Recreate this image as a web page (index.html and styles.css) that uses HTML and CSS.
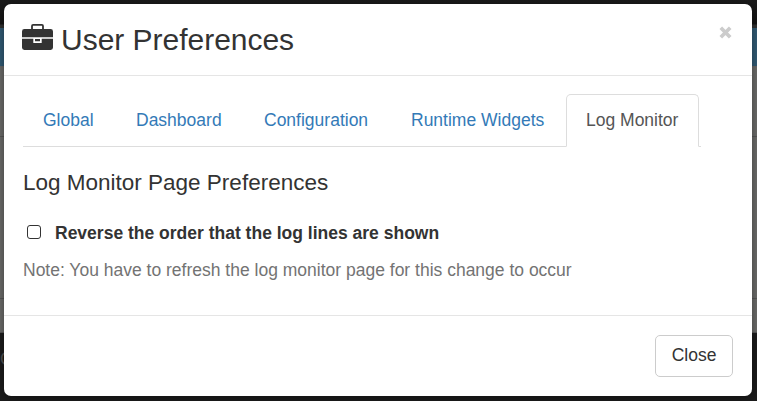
FILE: index.html
```
<!DOCTYPE html>
<html lang="en">
<head>
<meta charset="utf-8">
<title>User Preferences</title>
<link rel="stylesheet" href="styles.css">
</head>
<body>
<div class="page" aria-hidden="true">
  <div class="page-nav"></div>
  <div class="page-banner"></div>
  <div class="page-row row-first"></div>
  <div class="page-row row-middle"></div>
  <div class="page-row row-last"></div>
  <div class="page-footer">C</div>
</div>
<div class="modal" role="dialog" aria-labelledby="title">
  <header class="modal-header">
    <svg class="briefcase" viewBox="0 0 31 26" aria-hidden="true">
      <path d="M10 5V2Q10 .9 11.1 .9H19.9Q21 .9 21 2V5" fill="none" stroke="#333" stroke-width="1.8"/>
      <path d="M2.4 5H28.6Q31 5 31 7.4V13.3H0V7.4Q0 5 2.4 5ZM0 14.8H11.3V19H19.7V14.8H31V23.6Q31 26 28.6 26H2.4Q0 26 0 23.6ZM13 15H18V17.3H13Z" fill="#333"/>
    </svg>
    <h1 class="title" id="title">User Preferences</h1>
    <button class="dismiss" aria-label="Dismiss">
      <svg viewBox="0 0 13 13"><path d="M1.8 1.8L11.2 11.2M11.2 1.8L1.8 11.2"/></svg>
    </button>
  </header>
  <main class="modal-body">
    <nav class="tabs">
      <a class="tab tab-global">Global</a>
      <a class="tab tab-dashboard">Dashboard</a>
      <a class="tab tab-configuration">Configuration</a>
      <a class="tab tab-widgets">Runtime Widgets</a>
      <a class="tab tab-log active">Log Monitor</a>
    </nav>
    <h2 class="section-title">Log Monitor Page Preferences</h2>
    <label class="option"><input class="checkbox" type="checkbox"><span>Reverse the order that the log lines are shown</span></label>
    <p class="note">Note: You have to refresh the log monitor page for this change to occur</p>
  </main>
  <footer class="modal-footer"><button class="close-button">Close</button></footer>
</div>
</body>
</html>
```
FILE: styles.css
```
* { box-sizing: border-box; }
body {
  margin: 0;
  height: 401px;
  overflow: hidden;
  background: #1a1a1a;
  color: #333;
  font: 17.5px/25px "Liberation Sans", Arial, sans-serif;
}
h1, h2, p { margin: 0; font-weight: 400; }
.page { display: flex; flex-direction: column; height: 401px; }
.page-nav { height: 28px; background: linear-gradient(#1b1b1b, #141414 24px, #303030 25px); }
.page-banner { height: 39px; background: #315a73; border-bottom: 1px solid #666; }
.page-row { background: #6a6a68; border-bottom: 1px solid #555; }
.row-first { height: 70px; }
.row-middle { height: 162px; }
.row-last { height: 34px; }
.page-footer { flex: 1; padding-top: 14px; background: #1c1c1c; color: #505050; }
.modal {
  position: absolute;
  top: 4px;
  left: 4px;
  width: 748px;
  height: 392px;
  display: flex;
  flex-direction: column;
  background: #fff;
  border-radius: 7px;
  box-shadow: 0 2px 8px rgba(0, 0, 0, .4);
}
.modal-header {
  display: flex;
  height: 72px;
  padding: 20px 20px 0 18px;
  border-bottom: 1px solid #e5e5e5;
}
.briefcase { width: 31px; height: 26px; }
.title { margin: -1px 0 0 8px; font-size: 30px; line-height: 33px; letter-spacing: -.02px; }
.dismiss { width: 13px; height: 13px; margin: 2px 0 0 auto; padding: 0; border: 0; background: none; }
.dismiss svg { display: block; width: 13px; height: 13px; stroke: #ccc; stroke-width: 3.7; }
.modal-body { height: 239px; padding: 18px 19px 0; }
.tabs { display: flex; width: 678px; height: 53px; border-bottom: 1px solid #ddd; }
.tab {
  height: 53px;
  padding: 13px 19px 0;
  border: 1px solid transparent;
  border-radius: 5px 5px 0 0;
  color: #337ab7;
  white-space: nowrap;
}
.tab-global { width: 93px; }
.tab-dashboard { width: 128px; }
.tab-configuration { width: 147px; }
.tab-widgets { width: 175px; }
.tab-log { width: 133px; }
.tab.active { color: #555; background: #fff; border-color: #ddd #ddd #fff; }
.section-title { margin-top: 23px; font-size: 22.5px; line-height: 26px; }
.option { display: flex; align-items: center; height: 26px; margin-top: 24px; padding-left: 4px; font-weight: 700; }
.checkbox { appearance: none; width: 14px; height: 14px; margin: 0 14px 2px 0; border: 1px solid #333; border-radius: 3px; background: #fff; }
.note { margin-top: 12px; color: #737373; }
.modal-footer { display: flex; flex: 1; justify-content: flex-end; padding: 19px 19px 0; border-top: 1px solid #e5e5e5; }
.close-button {
  width: 78px;
  height: 42px;
  padding: 0 0 2px;
  border: 1px solid #ccc;
  border-radius: 5px;
  background: #fff;
  color: #333;
  font: inherit;
}
```
